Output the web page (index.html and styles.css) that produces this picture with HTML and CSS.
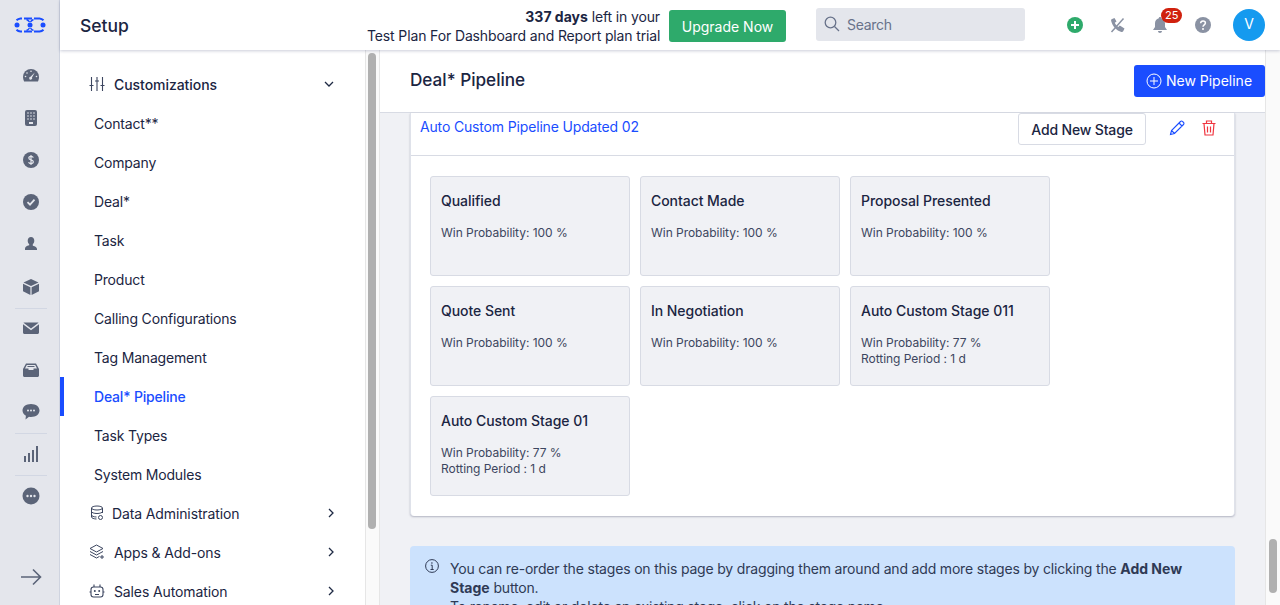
FILE: index.html
```html
<!DOCTYPE html>
<html lang="en">
<head>
    <meta charset="utf-8">
    <title>Deal* Pipeline</title>
    <meta name="viewport" content="width=device-width, initial-scale=1">
    <link rel="stylesheet" href="styles.css">
</head>
<body>
<div class="app">
    <nav class="rail">
        <svg class="logo" width="32" height="16" viewBox="0 0 32 16">
            <g fill="none" stroke="#1a4dff" stroke-width="2">
                <path d="M8 1.500h-1.500a6.500 6.500 0 0 0-4 1.800M10 1.500h8M20 1.500h5.500a6.500 6.500 0 0 1 4 1.800M8 14.500h-1.500a6.500 6.500 0 0 1-4-1.800M10 14.500h8M20 14.500h5.500a6.500 6.500 0 0 0 4-1.800"/>
                <path d="M12.500 2.500a6 6 0 0 1 3 2.500M19.500 2.500a6 6 0 0 0-3 2.500M12.500 13.500a6 6 0 0 0 3-2.500M19.500 13.500a6 6 0 0 1-3-2.500" stroke-width="1.400"/>
            </g>
            <circle cx="3" cy="8" r="2.500" fill="#1a4dff"/>
            <circle cx="16" cy="8" r="2.500" fill="#1a4dff"/>
            <circle cx="29" cy="8" r="2.500" fill="#1a4dff"/>
        </svg>
        <ul class="rail-group rail-first">
            <li><svg width="16" height="16" viewBox="0 0 16 16"><path fill="#5b6478" d="M8 1a8 8 0 0 0-8 8c0 1.700.4 3 1.100 4.500h13.800C15.600 12 16 10.700 16 9a8 8 0 0 0-8-8z"/><g fill="#e4e6ec"><circle cx="2.500" cy="8.500" r=".8"/><circle cx="4" cy="5" r=".8"/><circle cx="8" cy="3.300" r=".8"/><circle cx="13.500" cy="8.500" r=".8"/><path d="M11.800 4.500L9 9.500a1.500 1.500 0 1 1-1.500-.8z"/></g></svg></li>
            <li><svg width="16" height="16" viewBox="0 0 16 16"><rect x="2" y="0" width="12" height="16" rx="2" fill="#5b6478"/><g fill="#e4e6ec"><circle cx="5" cy="3" r=".8"/><circle cx="8" cy="3" r=".8"/><circle cx="11" cy="3" r=".8"/><circle cx="5" cy="6" r=".8"/><circle cx="8" cy="6" r=".8"/><circle cx="11" cy="6" r=".8"/><circle cx="5" cy="9" r=".8"/><circle cx="8" cy="9" r=".8"/><circle cx="11" cy="9" r=".8"/><rect x="6" y="12" width="4" height="2"/></g></svg></li>
            <li><svg width="16" height="16" viewBox="0 0 16 16"><circle cx="8" cy="8" r="8" fill="#5b6478"/><path d="M10.300 5.600C10 4.700 9 4.400 8 4.400c-1.200 0-2.200.6-2.200 1.700 0 2.300 4.500 1.300 4.500 3.700 0 1.100-1 1.800-2.300 1.800-1.200 0-2.100-.5-2.400-1.500M8 3v10" fill="none" stroke="#e4e6ec" stroke-width="1.200"/></svg></li>
            <li><svg width="16" height="16" viewBox="0 0 16 16"><circle cx="8" cy="8" r="8" fill="#5b6478"/><path d="M4.500 8.200l2.500 2.500 4.500-5" fill="none" stroke="#e4e6ec" stroke-width="1.800"/></svg></li>
            <li><svg width="16" height="16" viewBox="0 0 16 16"><path fill="#5b6478" d="M8 1c2 0 3.300 1.600 3.300 3.800 0 1.500-.6 2.800-1.500 3.500v1.400c2.600.6 4.200 1.700 4.200 3.300V14H2v-1.500c0-1.600 1.600-2.700 4.200-3.300V8.300c-.9-.7-1.500-2-1.500-3.500C4.700 2.600 6 1 8 1z"/></svg></li>
            <li><svg width="16" height="16" viewBox="0 0 16 16"><path fill="#5b6478" d="M8 0l7.500 3.500L8 7 .5 3.500zM0 4.800l7.400 3.400V16L0 12.300zM16 4.800v7.500L8.600 16V8.200z"/></svg></li>
        </ul>
        <ul class="rail-group">
            <li><svg width="16" height="16" viewBox="0 0 16 16"><path fill="#5b6478" d="M1.500 2.500h13c.4 0 .7.100 1 .3L8 8.500.5 2.800c.3-.2.600-.3 1-.3zM0 4.300l8 6 8-6v8.200c0 .8-.7 1.500-1.500 1.500h-13C.7 14 0 13.300 0 12.500z"/></svg></li>
            <li><svg width="16" height="16" viewBox="0 0 16 16"><path fill="#5b6478" d="M3 1.500h10L16 7v6.500c0 .8-.7 1.500-1.500 1.500h-13C.7 15 0 14.300 0 13.500V7zM3.800 3L2 6.500h3.500V8h5V6.500H14L12.200 3zM4.500 4h7v1h-7z"/></svg></li>
            <li><svg width="18" height="16" viewBox="0 0 18 16"><path fill="#5b6478" d="M9 0c5 0 8.500 2.800 8.500 6.500S14 13 9 13c-.7 0-1.300 0-2-.2L3.500 15.500l.4-3.800C1.800 10.600.5 8.700.5 6.500.5 2.800 4 0 9 0z"/><g fill="#e4e6ec"><circle cx="6" cy="6.500" r="1"/><circle cx="9" cy="6.500" r="1"/><circle cx="12" cy="6.500" r="1"/></g></svg></li>
        </ul>
        <ul class="rail-group">
            <li><svg width="16" height="16" viewBox="0 0 16 16"><g fill="#5b6478"><rect x="1" y="10" width="2" height="6"/><rect x="5" y="7" width="2" height="9"/><rect x="9" y="4" width="2" height="12"/><rect x="13" y="0" width="2" height="16"/></g></svg></li>
        </ul>
        <ul class="rail-group rail-last">
            <li><svg width="18" height="18" viewBox="0 0 18 18"><circle cx="9" cy="9" r="8.500" fill="#5b6478"/><g fill="#e4e6ec"><circle cx="5.500" cy="9" r="1.200"/><circle cx="9" cy="9" r="1.200"/><circle cx="12.500" cy="9" r="1.200"/></g></svg></li>
        </ul>
        <svg class="rail-expand" width="22" height="18" viewBox="0 0 22 18"><path d="M1 9h19M13 1.500L20.500 9 13 16.500" fill="none" stroke="#5b6478" stroke-width="1.600"/></svg>
    </nav>

    <div class="main">
        <header class="topbar">
            <div class="topbar-title">Setup</div>
            <div class="trial"><strong>337 days</strong> left in your<br>Test Plan For Dashboard and Report plan trial</div>
            <button class="btn-upgrade">Upgrade Now</button>
            <div class="search">
                <svg width="16" height="16" viewBox="0 0 16 16"><circle cx="6.500" cy="6.500" r="5.300" fill="none" stroke="#68728a" stroke-width="1.300"/><path d="M10.500 10.500L15 15" stroke="#68728a" stroke-width="1.300"/></svg>
                <span>Search</span>
            </div>
            <div class="top-icons">
                <svg width="16" height="16" viewBox="0 0 16 16"><circle cx="8" cy="8" r="8" fill="#2eaa6b"/><path d="M8 4v8M4 8h8" stroke="#fff" stroke-width="2"/></svg>
                <svg width="16" height="16" viewBox="0 0 16 16"><path fill="#8a92a3" d="M1.500 2.300L4.500 1l2 3.500-1.700 1.300c.7 1.500 1.900 3.100 3.400 4.300l1.600-1.500 4.700 3-1.300 2.700c-.3.500-1 .8-1.800.6C6.500 13.700 2.500 9.500 1.100 3.800c-.1-.6 0-1.200.4-1.500z"/><path d="M1.500 15L13.500 1.500" stroke="#8a92a3" stroke-width="1.500"/></svg>
                <span class="bell">
                    <svg width="16" height="16" viewBox="0 0 16 16"><path fill="#8a92a3" d="M8 0c.7 0 1.200.5 1.200 1.200 2.300.5 3.800 2.500 3.800 5V10l2 3H1l2-3V6.200c0-2.500 1.500-4.500 3.800-5C6.800.5 7.300 0 8 0zM6 14h4c0 1.100-.9 2-2 2s-2-.9-2-2z"/></svg>
                    <span class="badge">25</span>
                </span>
                <svg width="16" height="16" viewBox="0 0 16 16"><circle cx="8" cy="8" r="8" fill="#8a92a3"/><path d="M5.600 6.200C5.700 4.800 6.700 4 8 4c1.400 0 2.400.8 2.400 2 0 1.900-2.400 1.800-2.400 3.700" fill="none" stroke="#fff" stroke-width="1.500"/><circle cx="8" cy="11.900" r="1" fill="#fff"/></svg>
                <div class="avatar">V</div>
            </div>
        </header>

        <div class="workspace">
            <aside class="sidenav">
                <div class="nav-row nav-head">
                    <svg class="nav-icon" width="16" height="16" viewBox="0 0 16 16"><path d="M2.500 1v14M8 1v14M13.500 1v14M.5 9.500h4M6 5h4M11.500 9.500h4" fill="none" stroke="#3c4660" stroke-width="1.100"/></svg>
                    <span class="nav-label nav-open">Customizations</span>
                    <svg class="chev chev-open" width="10" height="10" viewBox="0 0 10 10"><path d="M1 3l4 4 4-4" fill="none" stroke="#1f2a44" stroke-width="1.300"/></svg>
                </div>
                <div class="nav-row nav-sub">Contact**</div>
                <div class="nav-row nav-sub">Company</div>
                <div class="nav-row nav-sub">Deal*</div>
                <div class="nav-row nav-sub">Task</div>
                <div class="nav-row nav-sub">Product</div>
                <div class="nav-row nav-sub">Calling Configurations</div>
                <div class="nav-row nav-sub">Tag Management</div>
                <div class="nav-row nav-sub nav-active">Deal* Pipeline</div>
                <div class="nav-row nav-sub">Task Types</div>
                <div class="nav-row nav-sub">System Modules</div>
                <div class="nav-row nav-head">
                    <svg class="nav-icon" width="14" height="16" viewBox="0 0 14 16"><g fill="none" stroke="#3c4660" stroke-width="1"><ellipse cx="7" cy="3" rx="5.500" ry="2"/><path d="M1.500 3v9c0 1.100 2.500 2 5 2M12.500 3v5M1.500 6.500c0 1.100 2.500 2 5.500 2s5.500-.9 5.500-2M1.500 10c0 1.100 2.500 2 5 2"/><circle cx="10.500" cy="12.500" r="2"/></g></svg>
                    <span class="nav-label nav-label-tight">Data Administration</span>
                    <svg class="chev" width="10" height="10" viewBox="0 0 10 10"><path d="M3 1l4 4-4 4" fill="none" stroke="#1f2a44" stroke-width="1.300"/></svg>
                </div>
                <div class="nav-row nav-head">
                    <svg class="nav-icon" width="16" height="16" viewBox="0 0 16 16"><g fill="none" stroke="#3c4660" stroke-width="1"><path d="M7.500 1L1 4.500 7.500 8 14 4.500zM1 7.500L7.500 11 14 7.500M1 10.500L7.500 14l3-1.600M13 11v4M11 13h4"/></g></svg>
                    <span class="nav-label">Apps &amp; Add-ons</span>
                    <svg class="chev" width="10" height="10" viewBox="0 0 10 10"><path d="M3 1l4 4-4 4" fill="none" stroke="#1f2a44" stroke-width="1.300"/></svg>
                </div>
                <div class="nav-row nav-head">
                    <svg class="nav-icon" width="16" height="16" viewBox="0 0 16 16"><g fill="none" stroke="#3c4660" stroke-width="1.100"><rect x="2" y="4" width="12" height="10" rx="2.500"/><path d="M5 4V1.500M11 4V1.500M2 9H.5M14 9h1.500M6 11.500h4"/></g><circle cx="5.800" cy="8" r="1" fill="#3c4660"/><circle cx="10.200" cy="8" r="1" fill="#3c4660"/></svg>
                    <span class="nav-label">Sales Automation</span>
                    <svg class="chev" width="10" height="10" viewBox="0 0 10 10"><path d="M3 1l4 4-4 4" fill="none" stroke="#1f2a44" stroke-width="1.300"/></svg>
                </div>
            </aside>
            <div class="scroll scroll-left"><div class="thumb"></div></div>

            <section class="content">
                <div class="page-head">
                    <h1>Deal* Pipeline</h1>
                    <button class="btn-primary">
                        <svg width="16" height="16" viewBox="0 0 16 16"><g fill="none" stroke="#fff" stroke-width="1"><circle cx="8" cy="8" r="7"/><path d="M8 4v8M4 8h8"/></g></svg>
                        New Pipeline
                    </button>
                </div>
                <div class="page-body">
                    <div class="pipeline">
                        <div class="pipeline-head">
                            <a class="pipeline-name">Auto Custom Pipeline Updated 02</a>
                            <button class="btn-stage">Add New Stage</button>
                            <svg class="act-edit" width="16" height="16" viewBox="0 0 16 16"><path d="M1.500 14.500l1-4L11.500 1.500c.6-.6 1.500-.6 2 0l1 1c.6.500.6 1.400 0 2L5.500 13.500zM2.500 10.500l3 3M10 3l3 3" fill="none" stroke="#1a4dff" stroke-width="1.100"/></svg>
                            <svg class="act-del" width="14" height="16" viewBox="0 0 14 16"><path d="M.5 3.500h13M4.500 3.500V1h5v2.500M2 3.500l1 11.500h8l1-11.500M5.500 6.500v6M8.500 6.500v6" fill="none" stroke="#f0353f" stroke-width="1.200"/></svg>
                        </div>
                        <div class="stages">
                            <div class="stage"><h3>Qualified</h3><p>Win Probability: 100 %</p></div>
                            <div class="stage"><h3>Contact Made</h3><p>Win Probability: 100 %</p></div>
                            <div class="stage"><h3>Proposal Presented</h3><p>Win Probability: 100 %</p></div>
                            <div class="stage"><h3>Quote Sent</h3><p>Win Probability: 100 %</p></div>
                            <div class="stage"><h3>In Negotiation</h3><p>Win Probability: 100 %</p></div>
                            <div class="stage"><h3>Auto Custom Stage 011</h3><p>Win Probability: 77 %<br>Rotting Period : 1 d</p></div>
                            <div class="stage"><h3>Auto Custom Stage 01</h3><p>Win Probability: 77 %<br>Rotting Period : 1 d</p></div>
                        </div>
                    </div>
                    <div class="notice">
                        <svg width="14" height="14" viewBox="0 0 14 14"><circle cx="7" cy="7" r="6.400" fill="none" stroke="#2f3a55" stroke-width="1"/><path d="M5.800 6.200H7.200V10.500M5.500 10.500h3.200" fill="none" stroke="#2f3a55" stroke-width="1"/><circle cx="6.900" cy="4" r=".8" fill="#2f3a55"/></svg>
                        <div>You can re-order the stages on this page by dragging them around and add more stages by clicking the <strong>Add New Stage</strong> button.<br>To rename, edit or delete an existing stage, click on the stage name.</div>
                    </div>
                </div>
            </section>
            <div class="scroll scroll-right"><div class="thumb"></div></div>
        </div>
    </div>
</div>
</body>
</html>
```
FILE: styles.css
```css
* {
    box-sizing: border-box;
}

html, body {
    height: 100%;
    margin: 0;
    overflow: hidden;
}

body {
    font-family: Inter, "Liberation Sans", sans-serif;
    font-size: 14px;
    color: #1b2542;
    background: #fff;
}

button {
    font-family: inherit;
    cursor: pointer;
}

.app {
    display: flex;
    height: 605px;
}

/* left icon rail */
.rail {
    width: 60px;
    flex: none;
    background: #e4e6ec;
    border-right: 1px solid #cfd4e0;
    display: flex;
    flex-direction: column;
    align-items: center;
    padding-top: 17px;
}

.logo {
    flex: none;
    margin-left: 1px;
}

.rail-group {
    list-style: none;
    margin: 0 0 -1px 3px;
    padding: 0;
    width: 32px;
    border-bottom: 1px solid #d2d7e3;
}

.rail-group li {
    height: 42px;
    display: flex;
    align-items: center;
    justify-content: center;
}

.rail-first {
    margin-top: 21.500px;
    margin-bottom: -1.700px;
}

.rail-first li {
    height: 42.200px;
}

.rail-last {
    border-bottom: 0;
}

.rail-expand {
    margin: 52px 0 0 2px;
    flex: none;
}

/* top header */
.main {
    flex: 1;
    min-width: 0;
    display: flex;
    flex-direction: column;
}

.topbar {
    height: 50px;
    flex: none;
    display: flex;
    align-items: center;
    background: #fff;
    box-shadow: 0 1px 3px rgba(80, 90, 130, .3);
    position: relative;
    z-index: 2;
    padding-left: 20px;
}

.topbar-title {
    font-size: 17.500px;
    font-weight: 500;
    width: 287px;
}

.trial {
    width: 293px;
    flex: none;
    text-align: right;
    line-height: 19px;
    letter-spacing: -.13px;
    margin-top: 2px;
    white-space: nowrap;
}

.trial strong {
    font-weight: 700;
    letter-spacing: 0;
}

.btn-upgrade {
    margin-left: 9px;
    width: 117px;
    height: 32px;
    background: #2eaa6b;
    color: #fff;
    border: 0;
    border-radius: 3px;
    font-size: 14px;
    margin-top: 2px;
}

.search {
    margin-left: 30px;
    width: 209px;
    height: 33px;
    background: #e4e6ec;
    border-radius: 3px;
    display: flex;
    align-items: center;
    gap: 7px;
    padding: 0 0 1px 8px;
    color: #68728a;
    letter-spacing: -.3px;
    margin-top: -1px;
}

.top-icons {
    margin-left: 42px;
    display: flex;
    align-items: center;
    gap: 26.500px;
}

.bell {
    position: relative;
    display: flex;
}

.badge {
    position: absolute;
    top: -9px;
    left: 9px;
    height: 15px;
    padding: 0 4px;
    border-radius: 8px;
    background: #d0210e;
    color: #fff;
    font-size: 11px;
    line-height: 15px;
}

.avatar {
    width: 32px;
    height: 32px;
    border-radius: 50%;
    background: #159aef;
    color: #fff;
    text-align: center;
    line-height: 30px;
    font-size: 14px;
    margin-left: -4px;
}

/* under the header */
.workspace {
    flex: 1;
    min-height: 0;
    display: flex;
}

.sidenav {
    width: 305px;
    flex: none;
    overflow: hidden;
    padding-top: 14.500px;
}

.nav-row {
    height: 39px;
    display: flex;
    align-items: center;
}

.nav-head {
    padding-left: 29px;
    padding-right: 29px;
}

.nav-head .nav-icon {
    flex: none;
    width: 16px;
}

.nav-label {
    margin-left: 9px;
    flex: 1;
    letter-spacing: -.12px;
}

.nav-label-tight {
    margin-left: 7px;
}

.nav-open {
    font-weight: 500;
    letter-spacing: -.05px;
}

.chev-open {
    margin-right: 2px;
}

.nav-sub {
    padding-left: 34px;
    letter-spacing: -.18px;
}

.nav-active {
    color: #1a4dff;
    font-weight: 500;
    border-left: 4px solid #1a4dff;
    padding-left: 30px;
}

.scroll {
    flex: none;
    width: 15px;
    background: #fafafa;
    border-left: 1px solid #e6e6e6;
    position: relative;
}

.scroll-left {
    border-right: 1px solid #e6e6e6;
}

.thumb {
    position: absolute;
    width: 8px;
    border-radius: 4px;
    background: #b0b0b0;
}

.scroll-left .thumb {
    left: 2px;
    top: 3px;
    height: 476px;
}

.scroll-right .thumb {
    left: 3px;
    top: 489px;
    height: 54px;
}

.content {
    flex: 1;
    min-width: 0;
    background: #f0f1f5;
    overflow: hidden;
}

.page-head {
    height: 63px;
    background: #fff;
    border-bottom: 1px solid #d8dbe4;
    display: flex;
    align-items: center;
    justify-content: space-between;
    padding-left: 30px;
}

.page-head h1 {
    margin: -3px 0 0;
    font-size: 17.150px;
    font-weight: 500;
}

.btn-primary {
    width: 131px;
    height: 32px;
    background: #1a4dff;
    color: #fff;
    border: 0;
    border-radius: 3px;
    font-size: 14px;
    display: flex;
    align-items: center;
    justify-content: center;
    gap: 4px;
    margin-top: -1px;
    padding-right: 7px;
}

.page-body {
    padding: 0 30px;
}

.pipeline {
    background: #fff;
    border-radius: 0 0 4px 4px;
    box-shadow: 0 1px 2px rgba(60, 70, 100, .35);
    height: 403px;
    border-left: 1px solid #dfe2ea;
    border-right: 1px solid #dfe2ea;
}

.pipeline-head {
    height: 43px;
    border-bottom: 1px solid #d8dbe4;
    display: flex;
    align-items: flex-start;
    padding-left: 9px;
}

.pipeline-name {
    color: #1a4dff;
    flex: 1;
    line-height: 28px;
    letter-spacing: -.16px;
}

.btn-stage {
    width: 128px;
    height: 32px;
    background: #fff;
    border: 1px solid #d8dbe4;
    border-radius: 3px;
    font-size: 14px;
    font-weight: 500;
    letter-spacing: -.15px;
    color: #1b2542;
    padding: 0;
}

.act-edit {
    margin: 7px 0 0 23px;
}

.act-del {
    margin: 7px 18px 0 17px;
}

.stages {
    display: grid;
    grid-template-columns: repeat(3, 200px);
    grid-auto-rows: 100px;
    gap: 10px;
    padding: 20px 19px;
}

.stage {
    background: #f0f1f5;
    border: 1px solid #d8dbe4;
    border-radius: 3px;
    padding: 15px 10px;
}

.stage h3 {
    margin: 0 0 15px;
    font-size: 14px;
    font-weight: 500;
    letter-spacing: -.05px;
    line-height: 18px;
}

.stage p {
    margin: 0;
    font-size: 12px;
    letter-spacing: -.04px;
    line-height: 16px;
    color: #3c4660;
}

.notice {
    margin-top: 30px;
    background: #cce2fd;
    border-radius: 4px;
    display: flex;
    align-items: flex-start;
    gap: 11px;
    padding: 13px 15px 12px;
    color: #2f3a55;
    line-height: 19px;
    letter-spacing: -.18px;
}

.notice svg {
    flex: none;
}

.notice strong {
    font-weight: 700;
    letter-spacing: 0;
}
```
